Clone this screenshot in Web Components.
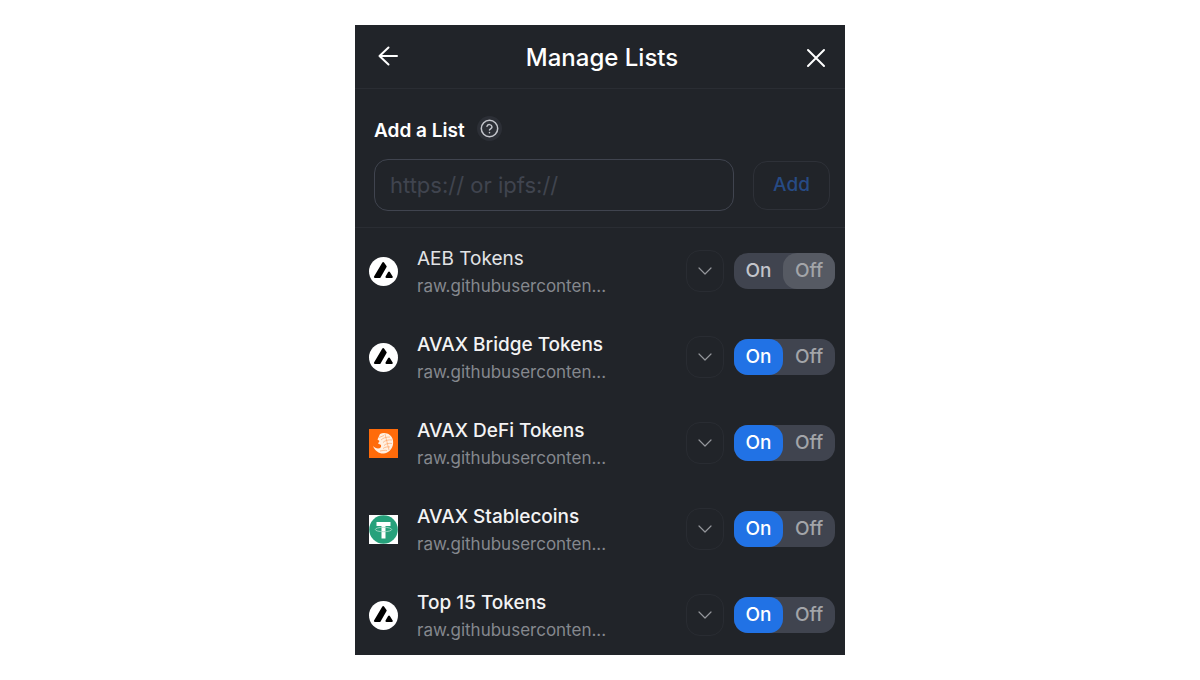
<!DOCTYPE html>
<html lang="en">
<head>
<meta charset="utf-8">
<title>Manage Lists</title>
<style>
  body {
    margin: 0;
    min-height: 100vh;
    display: flex;
    align-items: center;
    justify-content: center;
    background: #fff;
    font-family: Inter, "Liberation Sans", sans-serif;
    --bg: #212429;
    --line: #2a2d33;
    --muted: #40444f;
    --blue: #2172e5;
  }
</style>
</head>
<body>
<manage-lists>
  <panel-header slot="header">Manage Lists</panel-header>
  <add-list slot="add">Add a List</add-list>
  <token-list logo="avax" quiet>AEB Tokens</token-list>
  <token-list logo="avax" active>AVAX Bridge Tokens</token-list>
  <token-list logo="defi" active>AVAX DeFi Tokens</token-list>
  <token-list logo="tether" active>AVAX Stablecoins</token-list>
  <token-list logo="avax" active>Top 15 Tokens</token-list>
</manage-lists>

<script>
class ManageLists extends HTMLElement {
  constructor() {
    super();
    this.attachShadow({ mode: "open" }).innerHTML = `
      <style>
        :host {
          display: block;
          width: 100%;
          max-width: 490px;
          background: var(--bg);
          color: #fff;
        }
        .lists {
          display: flex;
          flex-direction: column;
          gap: 36px;
          padding: 18px 10px 15px 14px;
        }
      </style>
      <slot name="header"></slot>
      <slot name="add"></slot>
      <div class="lists"><slot></slot></div>
    `;
  }
}

class PanelHeader extends HTMLElement {
  constructor() {
    super();
    this.attachShadow({ mode: "open" }).innerHTML = `
      <style>
        :host {
          display: flex;
          align-items: center;
          justify-content: space-between;
          height: 61px;
          padding: 2px 16px 0 20px;
          border-bottom: 1px solid var(--line);
        }
        h1 {
          margin: 0;
          font-size: 24px;
          line-height: 32px;
          font-weight: 500;
        }
        button {
          display: flex;
          padding: 0;
          border: 0;
          background: none;
          color: inherit;
          cursor: pointer;
        }
        svg {
          fill: none;
          stroke: currentColor;
          stroke-width: 2;
          stroke-linecap: round;
          stroke-linejoin: round;
        }
      </style>
      <button aria-label="Back">
        <svg width="26" height="26" viewBox="0 0 26 26"><path d="M22 11H4.500M13.500 2.500L4.500 11l9 8.500"/></svg>
      </button>
      <h1><slot></slot></h1>
      <button aria-label="Close">
        <svg width="26" height="26" viewBox="0 0 26 26"><path d="M5 5l16 16M21 5L5 21"/></svg>
      </button>
    `;
  }
}

class AddList extends HTMLElement {
  constructor() {
    super();
    this.attachShadow({ mode: "open" }).innerHTML = `
      <style>
        :host {
          display: block;
          padding: 27px 15px 16px 19px;
          border-bottom: 1px solid var(--line);
        }
        .title, form {
          display: flex;
          align-items: center;
        }
        .title {
          align-items: flex-start;
          gap: 12px;
          margin-bottom: 16px;
        }
        label {
          padding-top: 3px;
          font-size: 19px;
          line-height: 24px;
          font-weight: 600;
        }
        .help {
          display: flex;
          padding: 0;
          border: 0;
          border-radius: 50%;
          background: #2c2f36;
          color: #c3c5cb;
        }
        .help svg {
          fill: none;
          stroke: currentColor;
          stroke-linecap: round;
          stroke-linejoin: round;
        }
        form {
          gap: 19px;
        }
        input {
          flex: 1;
          min-width: 0;
          box-sizing: border-box;
          height: 52px;
          padding: 0 15px;
          border: 1px solid var(--muted);
          border-radius: 14px;
          outline: none;
          background: none;
          color: #fff;
          font: 22px/28px Inter, "Liberation Sans", sans-serif;
        }
        input::placeholder {
          color: var(--muted);
        }
        .add {
          width: 77px;
          height: 49px;
          padding: 0;
          border: 1px solid #2e3138;
          border-radius: 14px;
          background: none;
          color: #274b85;
          font: 500 19px/24px Inter, "Liberation Sans", sans-serif;
        }
      </style>
      <div class="title">
        <label for="url"><slot></slot></label>
        <button class="help" aria-label="About lists">
          <svg width="25" height="25" viewBox="0 0 25 25">
            <circle cx="12.500" cy="12.500" r="8.200" stroke-width="1.500"/>
            <path stroke-width="1.500" d="M10 10.200a2.600 2.600 0 0 1 5 .8c0 1.600-2.500 2-2.500 3.100M12.500 16.600v.1"/>
          </svg>
        </button>
      </div>
      <form>
        <input id="url" type="text" placeholder="https:// or ipfs://" autocomplete="off">
        <button class="add" type="button">Add</button>
      </form>
    `;
  }
}

const logos = {
  avax: `
    <circle cx="14.500" cy="14.500" r="14.500" fill="#fff"/>
    <path fill="#000" stroke="#000" stroke-width="2" stroke-linejoin="round"
      d="M14.200 6L5.900 20h4.800l6-10.400zM20 15.600L17.400 20h5.400z"/>`,
  defi: `
    <path fill="#ff6b0a" d="M0 0h29v29H0z"/>
    <path fill="#fff0e2" d="M11 5c5-2.600 12 .2 13 6.500 1 6.500-3 12-9 13-4.500.5-9-2.500-11-7.500 1.500 1.500 3 2.500 5 2.500 2.500 0 3.500-1.500 3-3.500L9 14.500l1.500-2.500-2-1.500z"/>
    <path fill="none" stroke="#ff9a55" stroke-width=".6"
      d="M10 8.500l5-2M12 11c2-2 5-3 9-3M14 13.500c2-2 5-3 9-2.500M15 16.500c2-2 5-2.500 8-2M14 19.500c2-1.500 5-2 7-1.500M11 22c3-.5 5-1 7-.5M16 5l4 16"/>`,
  tether: `
    <path fill="#fff" d="M0 0h29v29H0z"/>
    <circle cx="14.500" cy="14.500" r="14.300" fill="#26a17b"/>
    <path fill="#fff" d="M7.500 7h14v4h-5v12.500h-4V11h-5z"/>
    <ellipse cx="14.500" cy="14.500" rx="8.200" ry="2.200" fill="none" stroke="#a5d8c7" stroke-width=".9"/>`
};

class TokenList extends HTMLElement {
  constructor() {
    super();
    this.attachShadow({ mode: "open" });
  }

  connectedCallback() {
    this.shadowRoot.innerHTML = `
      <style>
        :host {
          display: flex;
          align-items: center;
          gap: 10px;
          height: 50px;
        }
        .logo {
          flex: none;
          margin-right: 9px;
        }
        .text {
          flex: 1;
          min-width: 0;
          padding-top: 4px;
        }
        h2, p {
          margin: 0;
          white-space: nowrap;
        }
        h2 {
          font-size: 19px;
          line-height: 26px;
          font-weight: 500;
          color: #f3f3f4;
        }
        :host([quiet]) h2 {
          font-weight: 400;
          color: #e2e3e5;
        }
        p {
          font-size: 17px;
          line-height: 28px;
          color: #85888e;
        }
        .more {
          display: flex;
          align-items: center;
          justify-content: center;
          width: 38px;
          height: 42px;
          padding: 0;
          border: 1px solid #292c32;
          border-radius: 14px;
          background: none;
          color: #94969b;
        }
      </style>
      <svg class="logo" width="29" height="29" viewBox="0 0 29 29" aria-hidden="true">${logos[this.getAttribute("logo")]}</svg>
      <div class="text">
        <h2><slot></slot></h2>
        <p>raw.githubuserconten...</p>
      </div>
      <button class="more" aria-label="List options">
        <svg width="16" height="10" viewBox="0 0 16 10" fill="none" stroke="currentColor" stroke-width="1.200" stroke-linecap="round" stroke-linejoin="round"><path d="M2 2l6 6 6-6"/></svg>
      </button>
      <on-off-toggle ${this.hasAttribute("active") ? "on" : ""}></on-off-toggle>
    `;
  }
}

class OnOffToggle extends HTMLElement {
  static observedAttributes = ["on"];

  constructor() {
    super();
    this.attachShadow({ mode: "open" }).innerHTML = `
      <style>
        :host {
          display: block;
        }
        button {
          display: flex;
          padding: 0;
          border: 0;
          border-radius: 14px;
          background: var(--muted);
          font: 500 19px/36px Inter, "Liberation Sans", sans-serif;
          color: #c3c5cb;
          cursor: pointer;
        }
        span {
          width: 49px;
          border-radius: 14px;
        }
        .off {
          width: 52px;
          color: #a3a5a9;
        }
        [aria-checked="true"] .on {
          background: var(--blue);
          color: #fff;
        }
        [aria-checked="false"] .off {
          background: #565a63;
        }
      </style>
      <button role="switch" aria-checked="false" aria-label="List enabled">
        <span class="on">On</span><span class="off">Off</span>
      </button>
    `;
    this.button = this.shadowRoot.querySelector("button");
    this.button.addEventListener("click", () => this.toggleAttribute("on"));
  }

  attributeChangedCallback() {
    this.button.setAttribute("aria-checked", this.hasAttribute("on"));
  }
}

customElements.define("manage-lists", ManageLists);
customElements.define("panel-header", PanelHeader);
customElements.define("add-list", AddList);
customElements.define("on-off-toggle", OnOffToggle);
customElements.define("token-list", TokenList);
</script>
</body>
</html>
